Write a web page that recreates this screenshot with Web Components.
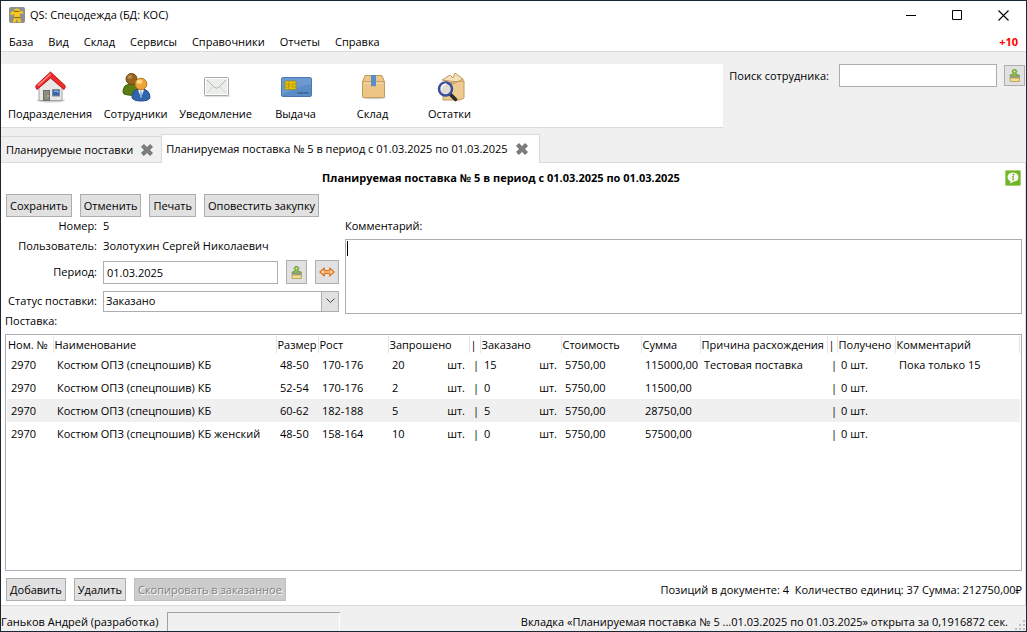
<!DOCTYPE html>
<html lang="ru">
<head>
<meta charset="utf-8">
<meta name="viewport" content="width=device-width, initial-scale=1">
<title>QS: Спецодежда (БД: КОС)</title>
<style>
    :root {
        --face: #f0f0f0;
        --line: #dadada;
        --edge: #abadb3;
        --btn: #e1e1e1;
        --btn-edge: #adadad;
    }
    body {
        margin: 0;
        font: 11px/16px "Open Sans", "Noto Sans", sans-serif;
        color: #000;
    }
</style>
</head>
<body>

<app-window>
    <title-bar slot="top">QS: Спецодежда (БД: КОС)</title-bar>
    <menu-bar slot="top" badge="+10">
        <a href="#base">База</a>
        <a href="#view">Вид</a>
        <a href="#stock">Склад</a>
        <a href="#services">Сервисы</a>
        <a href="#catalogs">Справочники</a>
        <a href="#reports">Отчеты</a>
        <a href="#help">Справка</a>
    </menu-bar>
    <tool-bar slot="top">
        <tool-item icon="house">Подразделения</tool-item>
        <tool-item icon="people">Сотрудники</tool-item>
        <tool-item icon="mail">Уведомление</tool-item>
        <tool-item icon="card">Выдача</tool-item>
        <tool-item icon="box">Склад</tool-item>
        <tool-item icon="search">Остатки</tool-item>
        <employee-search slot="aside"></employee-search>
    </tool-bar>
    <tab-strip slot="top">
        <tab-item>Планируемые поставки</tab-item>
        <tab-item active>Планируемая поставка № 5 в период с 01.03.2025 по 01.03.2025</tab-item>
    </tab-strip>
    <supply-page>
        <span slot="title">Планируемая поставка № 5 в период с 01.03.2025 по 01.03.2025</span>
        <push-button slot="actions">Сохранить</push-button>
        <push-button slot="actions">Отменить</push-button>
        <push-button slot="actions">Печать</push-button>
        <push-button slot="actions">Оповестить закупку</push-button>
        <supply-form slot="form"></supply-form>
        <supply-table slot="grid"></supply-table>
        <push-button slot="commands">Добавить</push-button>
        <push-button slot="commands">Удалить</push-button>
        <push-button slot="commands" disabled>Скопировать в заказанное</push-button>
        <span slot="totals">Позиций в документе: 4&nbsp; Количество единиц: 37 Сумма: 212750,00₽</span>
    </supply-page>
    <status-bar slot="bottom">
        Ганьков Андрей (разработка)
        <span slot="message">Вкладка «Планируемая поставка № 5 ...01.03.2025 по 01.03.2025» открыта за 0,1916872 сек.</span>
    </status-bar>
</app-window>

<script>
// name: [drawn size, shapes, viewBox size when it differs]
const ICONS = {
    app: [16, `
        <rect width="16" height="16" rx="2" fill="#8f8f8f"/>
        <path d="M5 3Q8 0 11 3v1.500H5z" fill="#ffcf1f"/>
        <path d="M1.500 5.500L5 3.800h6l3.500 1.200-.6 1.800-3-.6V11l1.600 4.200H9.200L8 11.500l-1.200 3.700H3.500L5.200 11V7L2.600 8.200 1.200 7z" fill="#f9c81c"/>
        <path d="M5 4.300h5.500M5.300 10.600h5.400" stroke="#6b5820" stroke-width="1"/>`],
    house: [32, `
        <ellipse cx="17" cy="29.500" rx="14" ry="2" fill="#000" opacity=".18"/>
        <path d="M5 17L16.500 6 28 17v12.500H5z" fill="#e8e8e8" stroke="#a2a2a2"/>
        <rect x="9.500" y="19.500" width="6" height="10" fill="#8c8c80" stroke="#6c6c66"/>
        <circle cx="14" cy="25" r=".8" fill="#ecd44e"/>
        <rect x="18.500" y="18.500" width="7" height="6.500" fill="#2f67b4" stroke="#888"/>
        <path d="M20 20.500q3-1.500 4.500 1" stroke="#86b4ea" stroke-width="1.500" fill="none"/>
        <path d="M16.500 1L2 14.500q-1 1.500 1 4L16.500 7 30 18.500q2-2.500 1-4z" fill="#ee2c2c" stroke="#c4171b"/>
        <path d="M16.500 3L4 14.500" stroke="#ff8d88" stroke-width="1.400" fill="none"/>`],
    people: [32, `
        <path d="M3 21q0-8 8-8 7 0 8 6v3q-6 4-15 1z" fill="#5c7d16" stroke="#3e580a"/>
        <circle cx="11.500" cy="8" r="5.500" fill="#976420" stroke="#704711"/>
        <ellipse cx="9.800" cy="6" rx="2.500" ry="2" fill="#c39451" opacity=".8"/>
        <path d="M12 27q-1-9 9-9 9 0 9 9-2 3-9 3t-9-3z" fill="#3166ad" stroke="#1f4b8d"/>
        <path d="M18 18.500h6L21 27z" fill="#f3f6fb"/><path d="M20.500 20h1l.5 5-1 2-1-2z" fill="#7ba7dd"/>
        <circle cx="21" cy="13" r="5.800" fill="#eda53a" stroke="#c07812"/>
        <ellipse cx="19.500" cy="10.800" rx="2.800" ry="2.200" fill="#ffd58b"/>`],
    mail: [32, `
        <rect x="4.500" y="23" width="25" height="3" fill="#000" opacity=".12"/>
        <rect x="4.500" y="6.500" width="24" height="18" rx="1" fill="#eceeeb" stroke="#a6a8a4"/>
        <path d="M5.500 7.500h22v16h-22z" fill="none" stroke="#fff"/>
        <path d="M7 9l7 7q2.500 2.500 5 0l7-7" fill="none" stroke="#b4b6b2"/>
        <path d="M7 22l6-6M26 22l-6-6" fill="none" stroke="#d2d4d0"/>`],
    card: [32, `
        <rect x="1.500" y="6.500" width="30" height="19" rx="1.500" fill="#5a8dc8" stroke="#4a79b2"/>
        <path d="M2 7h29v6Q16 16 2 24z" fill="#7ea8d8" opacity=".5"/>
        <rect x="5" y="10" width="11" height="8.500" rx="1" fill="#e5c30c" stroke="#a18106" stroke-width=".6"/>
        <path d="M5 13h4v3H5M16 13h-4v3h4M9 10v8.500" fill="none" stroke="#a18106" stroke-width=".6"/>
        <path d="M17.500 22h11" stroke="#24405f" stroke-dasharray="2 .5 3 .6"/>`],
    box: [32, `
        <ellipse cx="17" cy="26.500" rx="12" ry="1.800" fill="#000" opacity=".18"/>
        <path d="M5.500 11L8 4.500h17l2.500 6.500z" fill="#ecc78b" stroke="#c19a5c"/>
        <path d="M5.500 11h22v14.500q0 1-1 1h-20q-1 0-1-1z" fill="#edc685" stroke="#c19a5c"/>
        <path d="M6.500 12h20" stroke="#fae5bd"/>
        <path d="M14 4h5v11.500q-1-1-2 0-1.500-1-3 0z" fill="#5a8ecb"/>`],
    search: [32, `
        <path d="M8 9l8-5 3 3 2-5 8 6v4z" fill="#f5dfb8" stroke="#c19a5c"/>
        <path d="M9 13l10-2 11-1v17l-4 2H9z" fill="#edca8f" stroke="#c19a5c"/>
        <path d="M9 9l10 4 10-5" stroke="#c49b5b" fill="none"/>
        <path d="M16.500 23.500l5 5" stroke="#2a2a2a" stroke-width="3.500" stroke-linecap="round"/>
        <circle cx="11.500" cy="18" r="6.500" fill="#dfe0ea" fill-opacity=".75" stroke="#3a4e9c" stroke-width="2.500"/>
        <path d="M7.500 17q1-4 5-4" stroke="#fff" stroke-width="1.500" fill="none"/>`],
    brush: [13, `
        <path d="M6 7V4.500q-1-1-.8-2.500Q5.800.5 8 .5t2.800 1.500Q11 3.500 10 4.500V7h3q1 0 1 1v1H2.500V8q0-1 1-1z" fill="#8fbc4e" stroke="#62912a" stroke-width="1"/>
        <circle cx="8" cy="3" r="1" fill="#e7f2d5"/>
        <path d="M2.500 9h11.500v2H2.500z" fill="#a0a5a0" stroke="#858585" stroke-width=".5"/>
        <path d="M2.500 11h11.500v4.500H3.500q-1.500 0-1-1.500z" fill="#f0df92" stroke="#ab9645" stroke-width="1"/>`, 16],
    swap: [16, `
        <path d="M1 9l5-4.500v3h6v-3L17 9l-5 4.500v-3H6v3z" fill="#fdd6a8" stroke="#dc7420" stroke-width="1.300" stroke-linejoin="round"/>
        <path d="M4 9h10" stroke="#f2a863"/>`, 18],
    cross: [14, `
        <path d="M4.500 1.800L8 5.300l3.500-3.500 2.700 2.700L10.700 8l3.500 3.500-2.700 2.700L8 10.700l-3.500 3.500-2.700-2.700L5.300 8 1.800 4.500z" fill="#7c7f7c" stroke="#5c5e5c" stroke-linejoin="round"/>`, 16],
    info: [16, `
        <rect x=".5" y=".5" width="15" height="15" rx="1" fill="#73b625" stroke="#a6cd77"/>
        <path d="M8 2.500q5.500.3 5.500 4.700T8.500 11.800L5 13.500l.5-2.300Q2.500 10 2.500 7 2.700 2.800 8 2.500z" fill="#f7f9f3"/>
        <circle cx="8.500" cy="4.600" r=".9" fill="#5f9f1a"/>
        <path d="M7.300 6.500h1l-.6 3.300h1.100" fill="none" stroke="#5f9f1a"/>`],
    minimize: [11, `<path d="M0 5.500h10" stroke="#000"/>`],
    maximize: [11, `<path d="M.5.500h9v9h-9z" fill="none" stroke="#000"/>`],
    close: [11, `<path d="M.5.500l10 10M10.500.500l-10 10" stroke="#000" stroke-width="1.100"/>`],
    grip: [12, `<path d="M9 1h2v2H9zM9 5h2v2H9zM5 5h2v2H5zM9 9h2v2H9zM5 9h2v2H5zM1 9h2v2H1z" fill="#bfbfbf"/>`],
};

function icon(name) {
    const [size, body, box = size] = ICONS[name];
    return `<svg width="${size}" height="${size}" viewBox="0 0 ${box} ${box}" aria-hidden="true">${body}</svg>`;
}

const BASE = `
    * { box-sizing: border-box; }
    svg { display: block; flex: none; }
    button, input, select, textarea { font: inherit; color: inherit; margin: 0; border-radius: 0; }
`;

const ICON_BUTTON = `
    .icon-btn {
        display: grid;
        place-items: center;
        flex: none;
        height: 21px;
        width: 21px;
        padding: 0;
        background: var(--btn);
        border: 1px solid var(--btn-edge);
    }
`;

function define(name, render) {
    customElements.define(name, class extends HTMLElement {
        constructor() {
            super();
            this.attachShadow({ mode: 'open' });
        }

        connectedCallback() {
            this.shadowRoot.innerHTML = `<style>${BASE}</style>${render(this)}`;
        }
    });
}

define('app-window', () => `
    <style>
        :host {
            display: flex;
            flex-direction: column;
            box-sizing: border-box;
            min-height: 100vh;
            border: 1px solid #1b2735;
            background: var(--face);
        }
        main { display: flex; flex: 1; }
    </style>
    <slot name="top"></slot>
    <main><slot></slot></main>
    <slot name="bottom"></slot>
`);

define('title-bar', () => `
    <style>
        :host {
            display: flex;
            align-items: center;
            height: 28px;
            padding-left: 8px;
            gap: 5px;
            background: #fff;
        }
        .name { flex: 1; }
        button {
            display: grid;
            place-items: center;
            width: 46px;
            height: 28px;
            padding: 0;
            background: none;
            border: 0;
        }
        .controls { display: flex; }
    </style>
    ${icon('app')}
    <span class="name"><slot></slot></span>
    <div class="controls">
        <button aria-label="Свернуть">${icon('minimize')}</button>
        <button aria-label="Развернуть">${icon('maximize')}</button>
        <button aria-label="Закрыть">${icon('close')}</button>
    </div>
`);

define('menu-bar', (el) => `
    <style>
        :host {
            display: flex;
            justify-content: space-between;
            align-items: center;
            height: 23px;
            box-sizing: border-box;
            padding: 3px 8px 0;
            background: #fff;
            border-bottom: 1px solid var(--line);
        }
        nav { display: flex; gap: 15px; }
        ::slotted(a) { color: #000; text-decoration: none; }
        .badge { color: #f00; font-weight: 700; }
    </style>
    <nav><slot></slot></nav>
    <span class="badge">${el.getAttribute('badge')}</span>
`);

define('tool-bar', () => `
    <style>
        :host { display: flex; align-items: flex-start; padding-top: 12px; }
        .items {
            display: flex;
            flex: 1;
            height: 64px;
            padding-left: 2px;
            background: #fff;
            border-bottom: 1px solid var(--line);
        }
    </style>
    <div class="items"><slot></slot></div>
    <slot name="aside"></slot>
`);

define('tool-item', (el) => `
    <style>
        :host { display: block; }
        button {
            display: flex;
            flex-direction: column;
            align-items: center;
            gap: 3px;
            min-width: 77px;
            padding: 7px 5px 0;
            background: none;
            border: 0;
        }
    </style>
    <button>${icon(el.getAttribute('icon'))}<span><slot></slot></span></button>
`);

define('employee-search', () => `
    <style>
        ${ICON_BUTTON}
        :host { display: flex; align-items: center; gap: 7px; padding: 0 1px 0 6px; }
        label { margin-right: 3px; white-space: nowrap; }
        input {
            width: 158px;
            height: 23px;
            padding: 0 3px;
            background: #fff;
            border: 1px solid var(--edge);
        }
    </style>
    <label for="who">Поиск сотрудника:</label>
    <input id="who" type="text">
    <button class="icon-btn" aria-label="Очистить">${icon('brush')}</button>
`);

define('tab-strip', () => `
    <style>
        :host {
            display: flex;
            align-items: flex-end;
            height: 29px;
            margin-top: 6px;
            background: linear-gradient(var(--line), var(--line)) bottom / 100% 1px no-repeat;
        }
    </style>
    <slot></slot>
`);

define('tab-item', () => `
    <style>
        :host {
            display: flex;
            align-items: center;
            gap: 7px;
            box-sizing: border-box;
            height: 27px;
            padding: 0 7px 0 5px;
            border: solid var(--line);
            border-width: 1px 0;
            background: var(--face);
        }
        :host([active]) {
            height: 29px;
            padding: 0 10px 0 4px;
            border-width: 1px 1px 0;
            background: #fff;
        }
        button { padding: 0; background: none; border: 0; }
    </style>
    <span><slot></slot></span>
    <button aria-label="Закрыть вкладку">${icon('cross')}</button>
`);

define('push-button', (el) => `
    <style>
        :host { display: block; }
        button {
            height: 23px;
            padding: 0 3px;
            background: var(--btn);
            border: 1px solid var(--btn-edge);
            white-space: nowrap;
        }
        button:disabled {
            background: #ccc;
            border-color: #bfbfbf;
            color: #808080;
            text-shadow: 1px 1px #fff;
        }
    </style>
    <button${el.hasAttribute('disabled') ? ' disabled' : ''}><slot></slot></button>
`);

define('supply-page', () => `
    <style>
        :host {
            display: flex;
            flex-direction: column;
            flex: 1;
            min-width: 0;
            padding: 0 3px 4px 4px;
            background: #fff;
            border: solid var(--line);
            border-width: 0 1px 1px 0;
        }
        header {
            display: grid;
            grid-template-columns: 1fr 24px;
            align-items: center;
            height: 29px;
            margin-bottom: 2px;
            padding-right: 1px;
        }
        h1 { margin: 0; font-size: 11px; line-height: 16px; text-align: center; }
        .info { justify-self: end; padding: 0; background: none; border: 0; }
        .row { display: flex; gap: 8px; align-items: center; padding-left: 1px; }
        .grid { display: flex; flex: 1; margin-bottom: 7px; }
        .totals { margin-left: auto; }
    </style>
    <header>
        <h1><slot name="title"></slot></h1>
        <button class="info" aria-label="Сведения">${icon('info')}</button>
    </header>
    <div class="row"><slot name="actions"></slot></div>
    <slot name="form"></slot>
    <div class="grid"><slot name="grid"></slot></div>
    <footer class="row">
        <slot name="commands"></slot>
        <span class="totals"><slot name="totals"></slot></span>
    </footer>
`);

define('supply-form', () => `
    <style>
        ${ICON_BUTTON}
        :host { display: block; }
        form { display: flex; gap: 6px; }
        .fields {
            display: grid;
            grid-template-columns: 92px 236px;
            grid-template-rows: 18px 22px 30px 28px;
            column-gap: 6px;
            align-items: center;
            flex: none;
        }
        .fields > :nth-child(odd) { justify-self: end; white-space: nowrap; }
        .period { display: flex; align-items: center; gap: 8px; }
        .period input {
            flex: 1;
            min-width: 0;
            height: 23px;
            padding: 0 3px;
            border: 1px solid var(--edge);
            background: #fff;
        }
        .period .icon-btn { height: 24px; }
        .period .wide { width: 24px; }
        .select { display: grid; }
        .select > * { grid-area: 1 / 1; }
        select {
            appearance: none;
            height: 21px;
            padding: 0 20px 0 2px;
            border: 1px solid var(--edge);
            background: #fff;
        }
        .arrow {
            justify-self: end;
            display: grid;
            place-items: center;
            width: 18px;
            height: 21px;
            background: var(--btn);
            border: 1px solid var(--btn-edge);
            pointer-events: none;
        }
        .comment { display: flex; flex: 1; flex-direction: column; gap: 5px; padding-top: 1px; }
        /* the first line shows the text cursor at its start */
        textarea {
            height: 75px;
            padding: 1px;
            border: 1px solid var(--edge);
            outline: 0;
            resize: none;
            background: linear-gradient(#000, #000) 1px 1px / 1px 15px no-repeat #fff;
        }
        .caption { display: block; line-height: 12px; margin-bottom: 7px; }
    </style>
    <form>
        <div class="fields">
            <span>Номер:</span><span>5</span>
            <span>Пользователь:</span><span>Золотухин Сергей Николаевич</span>
            <label for="period">Период:</label>
            <div class="period">
                <input id="period" type="text" value="01.03.2025">
                <button type="button" class="icon-btn" aria-label="Очистить">${icon('brush')}</button>
                <button type="button" class="icon-btn wide" aria-label="Выбрать период">${icon('swap')}</button>
            </div>
            <label for="status">Статус поставки:</label>
            <div class="select">
                <select id="status"><option>Заказано</option></select>
                <span class="arrow"><svg width="9" height="6" viewBox="0 0 9 6"><path d="M.5.500l4 4 4-4" fill="none" stroke="#444"/></svg></span>
            </div>
        </div>
        <div class="comment">
            <label for="comment">Комментарий:</label>
            <textarea id="comment"></textarea>
        </div>
    </form>
    <span class="caption">Поставка:</span>
`);

const COLUMNS = [
    ['Ном. №', 46], ['Наименование', 223], ['Размер', 42], ['Рост', 70],
    ['Запрошено', 81], ['|', 11], ['Заказано', 81], ['Стоимость', 80],
    ['Сумма', 59], ['Причина расхождения', 127], ['|', 10], ['Получено', 58],
    ['Комментарий', 0],
];

const ROWS = [
    ['2970', 'Костюм ОПЗ (спецпошив) КБ', '48-50', '170-176', '20', '|', '15', '5750,00', '115000,00', 'Тестовая поставка', '|', '0 шт.', 'Пока только 15'],
    ['2970', 'Костюм ОПЗ (спецпошив) КБ', '52-54', '170-176', '2', '|', '0', '5750,00', '11500,00', '', '|', '0 шт.', ''],
    ['2970', 'Костюм ОПЗ (спецпошив) КБ', '60-62', '182-188', '5', '|', '5', '5750,00', '28750,00', '', '|', '0 шт.', ''],
    ['2970', 'Костюм ОПЗ (спецпошив) КБ женский', '48-50', '158-164', '10', '|', '0', '5750,00', '57500,00', '', '|', '0 шт.', ''],
];

// quantity columns show the value on the left and its unit on the right
const QUANTITY = [4, 6];

define('supply-table', () => `
    <style>
        :host {
            display: block;
            flex: 1;
            min-width: 0;
            padding: 1px;
            border: 1px solid var(--edge);
            background: #fff;
        }
        table { width: 100%; border-collapse: collapse; table-layout: fixed; }
        th, td { padding: 0; text-align: left; white-space: nowrap; }
        th {
            height: 17px;
            padding-left: 1px;
            font-weight: 400;
            border-right: 1px solid #e5e5e5;
        }
        td { height: 23px; padding-left: 4px; }
        .qty { display: flex; justify-content: space-between; padding-right: 4px; }
        tr.selected { background: var(--face); }
    </style>
    <table>
        <colgroup>${COLUMNS.map(([, w]) => w ? `<col style="width:${w}px">` : '<col>').join('')}</colgroup>
        <thead><tr>${COLUMNS.map(([name]) => `<th>${name}</th>`).join('')}</tr></thead>
        <tbody>${ROWS.map((row, i) => `
            <tr${i === 2 ? ' class="selected"' : ''}>${row.map((cell, c) =>
                QUANTITY.includes(c)
                    ? `<td><span class="qty"><span>${cell}</span><span>шт.</span></span></td>`
                    : `<td>${cell}</td>`).join('')}</tr>`).join('')}
        </tbody>
    </table>
`);

define('status-bar', () => `
    <style>
        :host { display: flex; align-items: flex-end; height: 25px; }
        .user, .message { padding-bottom: 1px; }
        .progress {
            width: 173px;
            height: 19px;
            margin-left: 9px;
            border: solid #a0a0a0;
            border-width: 1px 0 0 1px;
            box-shadow: inset -1px 0 #fff;
        }
        .message { margin-left: auto; margin-right: 6px; }
    </style>
    <span class="user"><slot></slot></span>
    <div class="progress"></div>
    <span class="message"><slot name="message"></slot></span>
    ${icon('grip')}
`);
</script>
</body>
</html>
